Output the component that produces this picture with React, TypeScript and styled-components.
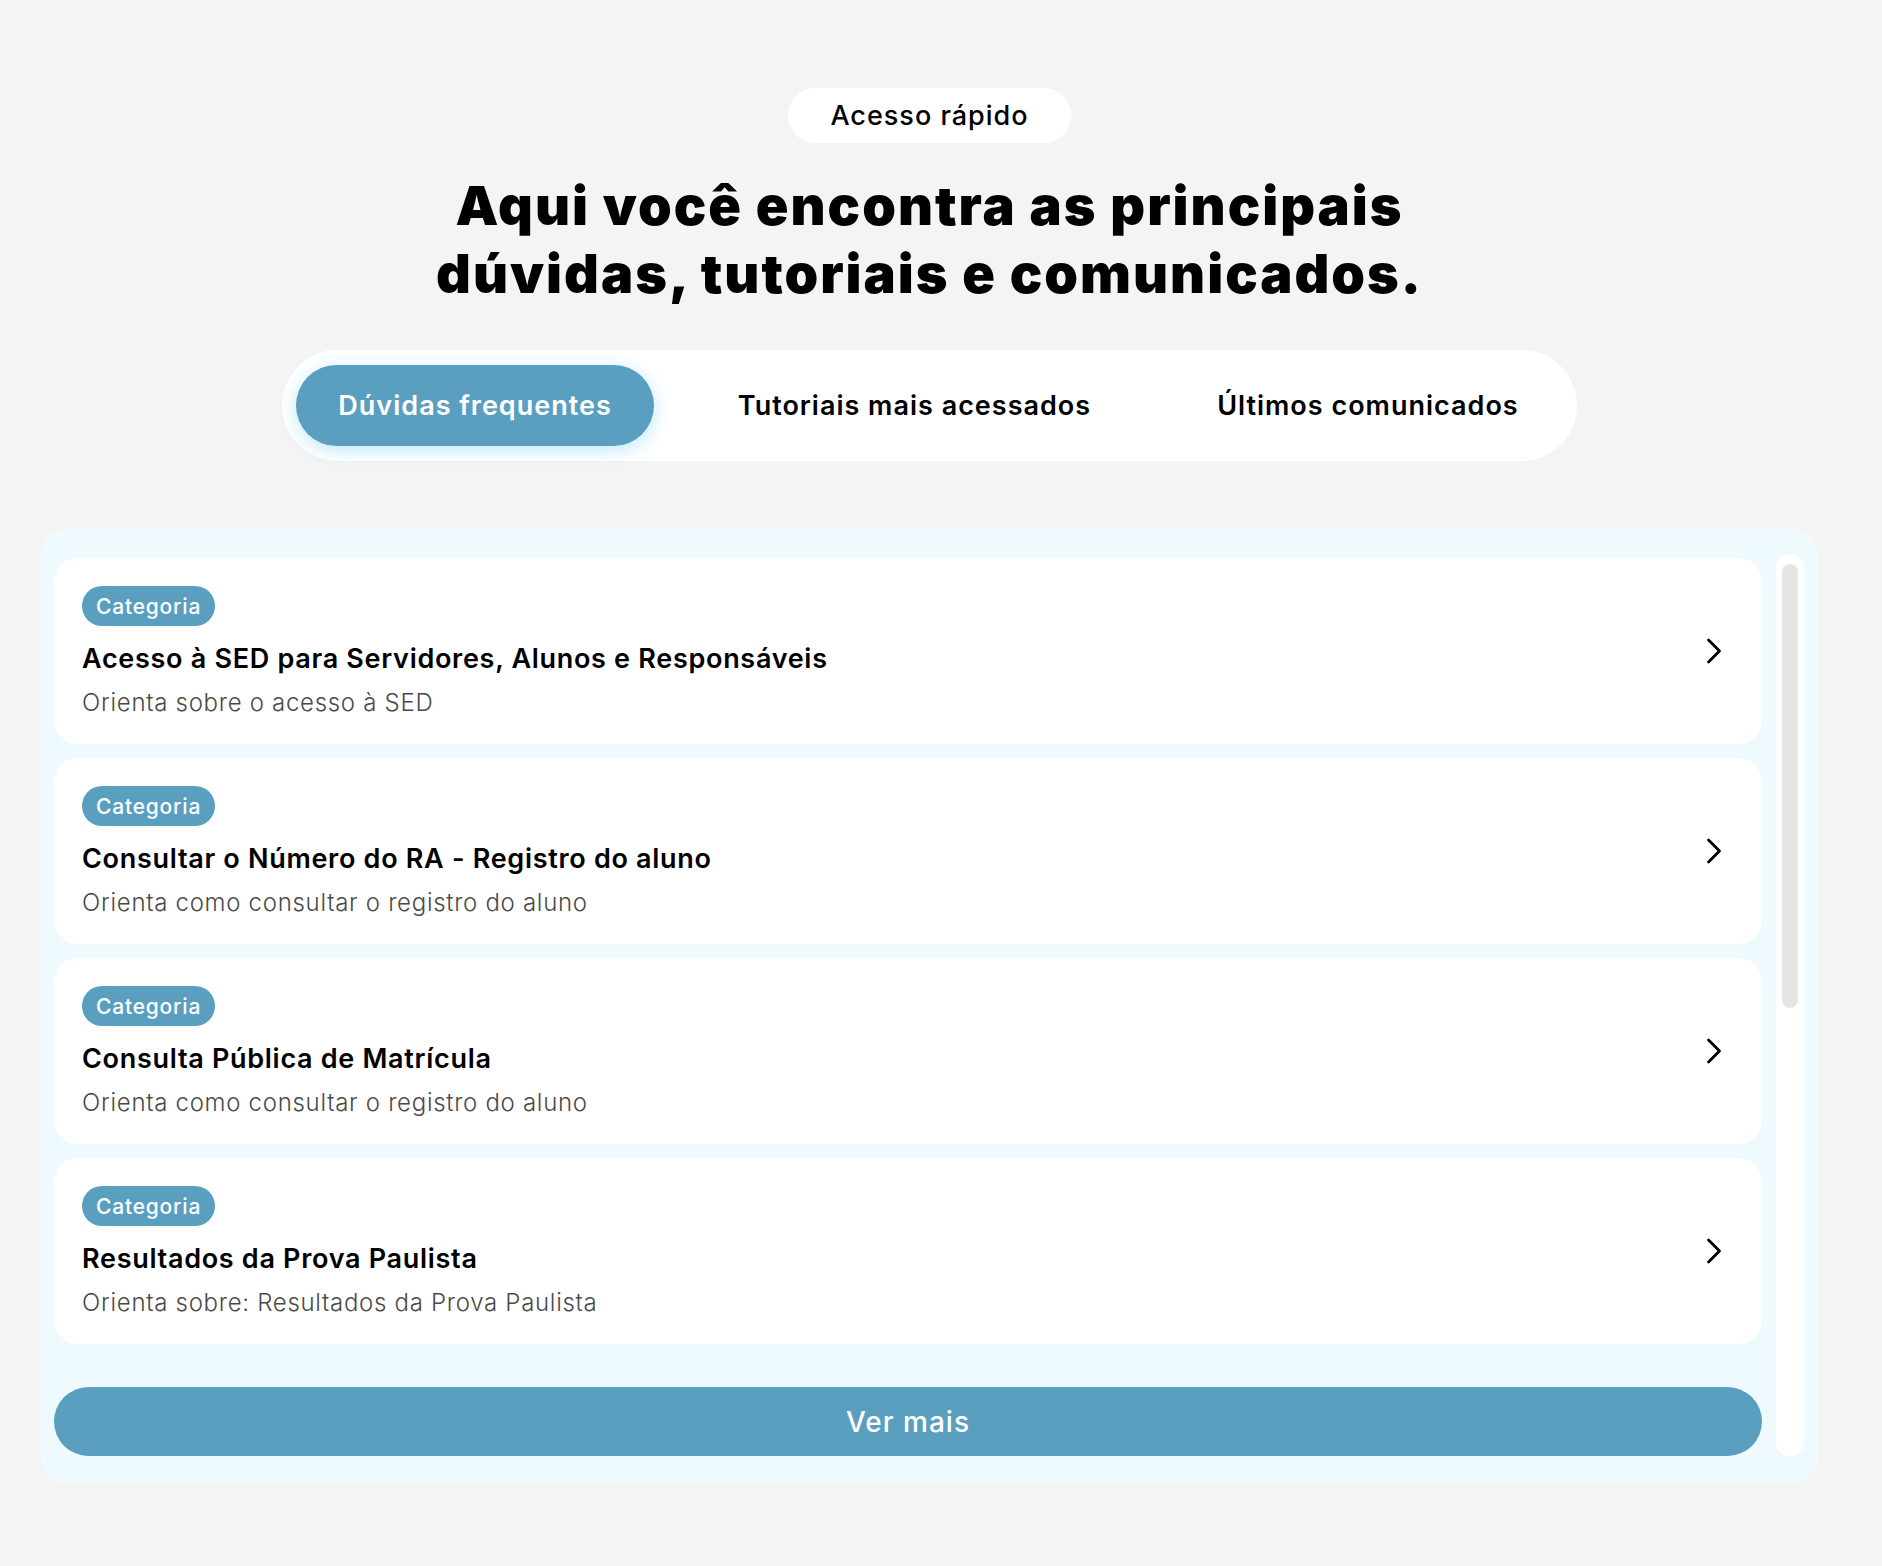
import styled, { createGlobalStyle } from "styled-components";

const GlobalStyle = createGlobalStyle`
  * {
    box-sizing: border-box;
  }
  body {
    margin: 0;
    background: #f4f4f4;
    font-family: Inter, "Noto Sans", sans-serif;
    color: #000;
  }
`;

const faqs = [
  {
    category: "Categoria",
    title: "Acesso à SED para Servidores, Alunos e Responsáveis",
    text: "Orienta sobre o acesso à SED",
  },
  {
    category: "Categoria",
    title: "Consultar o Número do RA - Registro do aluno",
    text: "Orienta como consultar o registro do aluno",
  },
  {
    category: "Categoria",
    title: "Consulta Pública de Matrícula",
    text: "Orienta como consultar o registro do aluno",
  },
  {
    category: "Categoria",
    title: "Resultados da Prova Paulista",
    text: "Orienta sobre: Resultados da Prova Paulista",
  },
];

const tabs = ["Dúvidas frequentes", "Tutoriais mais acessados", "Últimos comunicados"];

export default function App() {
  return (
    <>
      <GlobalStyle />
      <Page>
        <Badge>Acesso rápido</Badge>
        <Heading>
          Aqui você encontra as principais
          <br />
          dúvidas, tutoriais e comunicados.
        </Heading>
        <TabBar>
          {tabs.map((tab, i) => (
            <Tab key={tab} $active={i === 0}>
              {tab}
            </Tab>
          ))}
        </TabBar>
        <Panel>
          <List>
            {faqs.map((item) => (
              <Card key={item.title}>
                <CardBody>
                  <Tag>{item.category}</Tag>
                  <CardTitle>{item.title}</CardTitle>
                  <CardText>{item.text}</CardText>
                </CardBody>
                <svg width="16" height="26" viewBox="0 0 16 26" fill="none">
                  <polyline
                    points="2.5,2 13.5,13 2.5,24"
                    stroke="#000"
                    strokeWidth="2.8"
                    strokeLinecap="round"
                    strokeLinejoin="round"
                  />
                </svg>
              </Card>
            ))}
            <MoreButton>Ver mais</MoreButton>
          </List>
          <ScrollTrack>
            <ScrollThumb />
          </ScrollTrack>
        </Panel>
      </Page>
    </>
  );
}

const Page = styled.main`
  display: flex;
  flex-direction: column;
  align-items: center;
  padding: 88px 64px 86px 41px;
`;

const Badge = styled.div`
  height: 55px;
  padding: 0 42px;
  display: flex;
  align-items: center;
  background: #fff;
  border-radius: 28px;
  font-size: 27px;
  font-weight: 500;
  letter-spacing: 1px;
`;

const Heading = styled.h1`
  margin: 29px 0 0;
  font-size: 54px;
  line-height: 68px;
  font-weight: 900;
  text-align: center;
  letter-spacing: 2px;
`;

const TabBar = styled.nav`
  margin-top: 42px;
  display: flex;
  align-items: center;
  gap: 42px;
  padding: 15px 16px 15px 14px;
  background: #fff;
  border-radius: 56px;
`;

const Tab = styled.button<{ $active?: boolean }>`
  height: 81px;
  padding: 0 42px;
  border: none;
  border-radius: 41px;
  font-family: inherit;
  font-size: 27px;
  font-weight: 600;
  letter-spacing: 1px;
  cursor: pointer;
  background: ${(p) => (p.$active ? "#5a9fbf" : "transparent")};
  color: ${(p) => (p.$active ? "#fff" : "#000")};
  box-shadow: ${(p) =>
    p.$active ? "0 4px 18px rgba(110, 205, 245, 0.45)" : "none"};
`;

const Panel = styled.section`
  margin-top: 68px;
  align-self: stretch;
  display: grid;
  grid-template-columns: 1fr 28px;
  gap: 14px;
  padding: 25px 14px 27px 13px;
  background: #effafe;
  border-radius: 26px;
`;

const List = styled.div`
  display: flex;
  flex-direction: column;
  gap: 14px;
  padding-top: 4px;
`;

const Card = styled.article`
  height: 186px;
  display: flex;
  align-items: center;
  justify-content: space-between;
  padding: 0 40px 0 28px;
  background: #fff;
  border-radius: 24px;
`;

const CardBody = styled.div`
  display: flex;
  flex-direction: column;
  align-items: flex-start;
  padding: 28px 0 24px;
`;

const Tag = styled.span`
  height: 40px;
  padding: 0 14px;
  display: inline-flex;
  align-items: center;
  background: #5a9fbf;
  color: #fff;
  border-radius: 20px;
  font-size: 21px;
  font-weight: 500;
  letter-spacing: 0.8px;
`;

const CardTitle = styled.h3`
  margin: 15px 0 0;
  font-size: 27px;
  line-height: 36px;
  font-weight: 600;
  letter-spacing: 0.7px;
`;

const CardText = styled.p`
  margin: 9px 0 0;
  font-size: 24px;
  line-height: 34px;
  font-weight: 300;
  letter-spacing: 0.7px;
  color: #4a4a4a;
`;

const MoreButton = styled.button`
  margin-top: 29px;
  height: 69px;
  border: none;
  border-radius: 35px;
  background: #5a9fbf;
  color: #fff;
  font-family: inherit;
  font-size: 28px;
  font-weight: 500;
  letter-spacing: 1px;
  cursor: pointer;
`;

const ScrollTrack = styled.div`
  background: #fff;
  border-radius: 14px;
  padding: 10px 6px;
`;

const ScrollThumb = styled.div`
  height: 444px;
  background: #e5e5e5;
  border-radius: 8px;
`;
